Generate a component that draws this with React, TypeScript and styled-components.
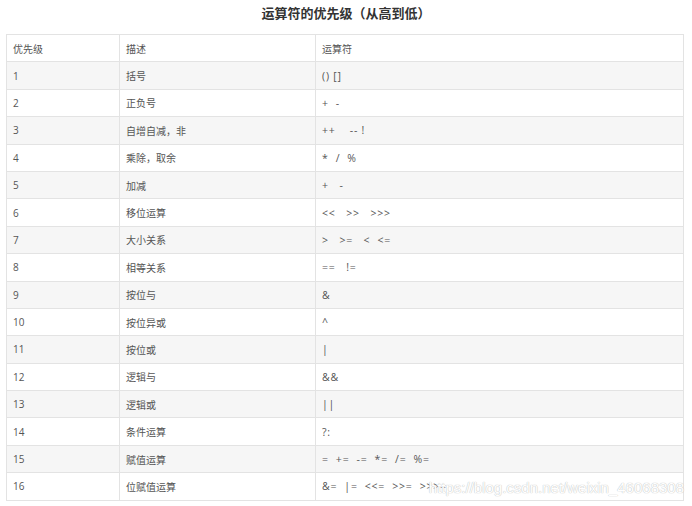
import React from 'react';
import styled, { createGlobalStyle } from 'styled-components';

const GlobalStyle = createGlobalStyle`
  html, body {
    margin: 0;
    padding: 0;
    background: #ffffff;
  }
  body {
    font-family: "Open Sans", "Noto Sans CJK SC", sans-serif;
  }
`;

interface IRow {
  level: number;
  desc: string;
  ops: string;
}

const rows: IRow[] = [
  { level: 1, desc: '括号', ops: '() []' },
  { level: 2, desc: '正负号', ops: '+  -' },
  { level: 3, desc: '自增自减，非', ops: '++    -- !' },
  { level: 4, desc: '乘除，取余', ops: '*  /  %' },
  { level: 5, desc: '加减', ops: '+   -' },
  { level: 6, desc: '移位运算', ops: '<<   >>   >>>' },
  { level: 7, desc: '大小关系', ops: '>   >=   <  <=' },
  { level: 8, desc: '相等关系', ops: '==   !=' },
  { level: 9, desc: '按位与', ops: '&' },
  { level: 10, desc: '按位异或', ops: '^' },
  { level: 11, desc: '按位或', ops: '|' },
  { level: 12, desc: '逻辑与', ops: '&&' },
  { level: 13, desc: '逻辑或', ops: '||' },
  { level: 14, desc: '条件运算', ops: '?:' },
  { level: 15, desc: '赋值运算', ops: '=  +=  -=  *=  /=  %=' },
  { level: 16, desc: '位赋值运算', ops: '&=  |=  <<=  >>=  >>>=' },
];

const App = () => {
  return (
    <>
      <GlobalStyle />
      <Wrapper>
        <Title>运算符的优先级（从高到低）</Title>
        <TableBox>
          <Table>
            <colgroup>
              <col style={{ width: 113 }} />
              <col style={{ width: 196 }} />
              <col />
            </colgroup>
            <thead>
              <Row striped={false}>
                <Cell>优先级</Cell>
                <Cell>描述</Cell>
                <Cell>运算符</Cell>
              </Row>
            </thead>
            <tbody>
              {rows.map((r, i) => (
                <Row key={r.level} striped={i % 2 === 0}>
                  <Cell>{r.level}</Cell>
                  <Cell>{r.desc}</Cell>
                  <OpCell>{r.ops}</OpCell>
                </Row>
              ))}
            </tbody>
          </Table>
          <Watermark>https://blog.csdn.net/weixin_46068308</Watermark>
        </TableBox>
      </Wrapper>
    </>
  );
};

const Wrapper = styled.div`
  width: 692px;
  height: 506px;
  overflow: hidden;
`;

const Title = styled.div`
  height: 34px;
  line-height: 26px;
  text-align: center;
  font-family: "Noto Sans CJK SC", sans-serif;
  font-weight: 700;
  font-size: 13px;
  color: #333333;
`;

const TableBox = styled.div`
  position: relative;
  margin-left: 6px;
  width: 678px;
`;

const Table = styled.table`
  width: 678px;
  border-collapse: collapse;
  table-layout: fixed;
`;

const Row = styled.tr<{ striped: boolean }>`
  height: 27.4px;
  background: ${p => (p.striped ? '#f6f6f6' : '#ffffff')};
`;

const Cell = styled.td`
  border: 1px solid #e3e3e3;
  padding: 0 6px;
  font-size: 10px;
  color: #555555;
  vertical-align: middle;
  white-space: nowrap;
`;

const OpCell = styled(Cell)`
  white-space: pre;
  font-size: 10.5px;
  letter-spacing: 0.8px;
`;

const Watermark = styled.div`
  position: absolute;
  right: 0;
  bottom: 5px;
  font-family: "Liberation Sans", Arial, sans-serif;
  font-size: 15px;
  color: #ffffff;
  text-shadow: 0 0 1px #c4c4c4, 0 0 1px #c4c4c4;
  pointer-events: none;
`;

export default App;
